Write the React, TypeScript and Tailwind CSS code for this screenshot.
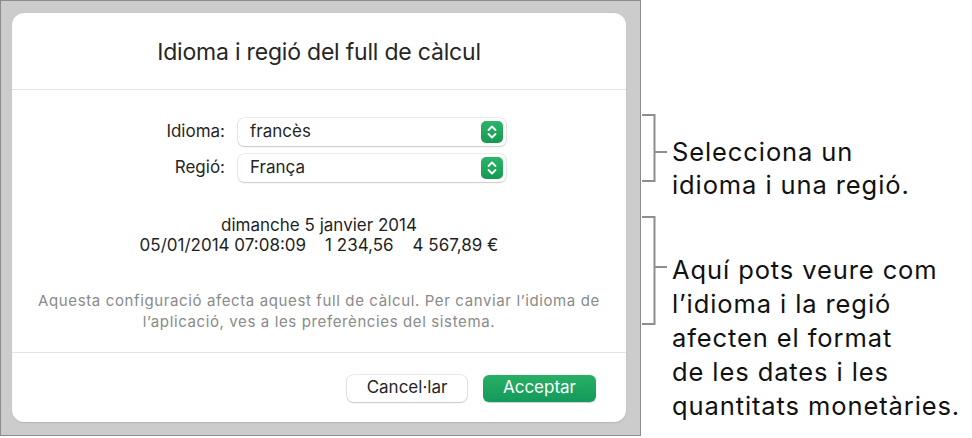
import React from 'react';

function Stepper() {
  return (
    <div className="flex h-[22px] w-[22px] items-center justify-center rounded-[5px] bg-gradient-to-b from-[#2bb56a] to-[#139a50]">
      <svg width="12" height="16" viewBox="0 0 12 16" fill="none">
        <path d="M2.5 6 L6 2.5 L9.5 6" stroke="white" strokeWidth="1.8" strokeLinecap="round" strokeLinejoin="round" />
        <path d="M2.5 10 L6 13.5 L9.5 10" stroke="white" strokeWidth="1.8" strokeLinecap="round" strokeLinejoin="round" />
      </svg>
    </div>
  );
}

function SelectRow({ label, value }: { label: string; value: string }) {
  return (
    <div className="flex items-center">
      <div className="w-[226px] pr-[13px] text-right text-[17px] text-[#262626]">{label}</div>
      <div className="flex h-[28px] w-[268px] items-center justify-between rounded-[6px] bg-white pl-[12px] pr-[3px] shadow-[0_0_0_0.5px_rgba(0,0,0,0.16),0_1px_1.5px_rgba(0,0,0,0.14)]">
        <span className="text-[17px] text-[#262626]">{value}</span>
        <Stepper />
      </div>
    </div>
  );
}

function Dialog() {
  return (
    <div className="flex h-[409px] w-[614px] flex-col rounded-[12px] bg-white shadow-[0_0.5px_1.5px_rgba(0,0,0,0.12)] font-['Inter',sans-serif]">
      <div className="flex h-[77px] items-center justify-center border-b border-[#e4e4e4] pt-[2px]">
        <h1 className="text-[23px] text-[#262626] tracking-[-0.2px]">Idioma i regió del full de càlcul</h1>
      </div>
      <div className="flex flex-1 flex-col border-b border-[#e4e4e4]">
        <div className="mt-[28px] flex flex-col gap-[8px]">
          <SelectRow label="Idioma:" value="francès" />
          <SelectRow label="Regió:" value="França" />
        </div>
        <div className="mt-[34px] flex flex-col items-center text-[17px] leading-[19.5px] text-[#1f1f1f]">
          <div>dimanche 5 janvier 2014</div>
          <div className="flex gap-[19px]">
            <span>05/01/2014 07:08:09</span>
            <span>1 234,56</span>
            <span>4 567,89 €</span>
          </div>
        </div>
        <div className="mt-[35px] text-center text-[15px] leading-[21px] tracking-[0.62px] text-[#8a8a8a]">
          Aquesta configuració afecta aquest full de càlcul. Per canviar l’idioma de
          <br />
          l’aplicació, ves a les preferències del sistema.
        </div>
      </div>
      <div className="flex h-[69px] items-center justify-end gap-[16px] pr-[30px] pt-[1px]">
        <button className="h-[27px] w-[120px] rounded-[6px] bg-white text-[17px] text-[#262626] shadow-[0_0_0_0.5px_rgba(0,0,0,0.18),0_1px_1.5px_rgba(0,0,0,0.14)]">
          Cancel·lar
        </button>
        <button className="h-[27px] w-[113px] rounded-[6px] bg-gradient-to-b from-[#27b066] to-[#13995a] text-[17px] text-white shadow-[0_0.5px_1px_rgba(0,0,0,0.2)]">
          Acceptar
        </button>
      </div>
    </div>
  );
}

export default function App() {
  return (
    <div className="flex h-[438px] w-[972px] bg-white">
      <div className="box-border h-[436px] w-[641px] border border-[#8c8c8c] bg-[#cccccc] pl-[11px] pt-[12px]">
        <Dialog />
      </div>
      <div className="flex flex-col font-['Inter',sans-serif] text-[25.5px] tracking-[0.9px] text-[#111111]">
        <div className="mt-[114px] flex">
          <svg width="31" height="68" viewBox="0 0 31 68" fill="none">
            <path d="M1 1 H13.5 V67 H1 M13.5 38 H26" stroke="#8e8e8e" strokeWidth="2" />
          </svg>
          <div className="mt-[21px] leading-[33px]">
            Selecciona un
            <br />
            idioma i una regió.
          </div>
        </div>
        <div className="mt-[15px] flex">
          <svg width="31" height="110" viewBox="0 0 31 110" fill="none">
            <path d="M1 1 H13.5 V108 H1 M13.5 51 H26" stroke="#8e8e8e" strokeWidth="2" />
          </svg>
          <div className="mt-[37px] leading-[34px]">
            Aquí pots veure com
            <br />
            l’idioma i la regió
            <br />
            afecten el format
            <br />
            de les dates i les
            <br />
            quantitats monetàries.
          </div>
        </div>
      </div>
    </div>
  );
}
